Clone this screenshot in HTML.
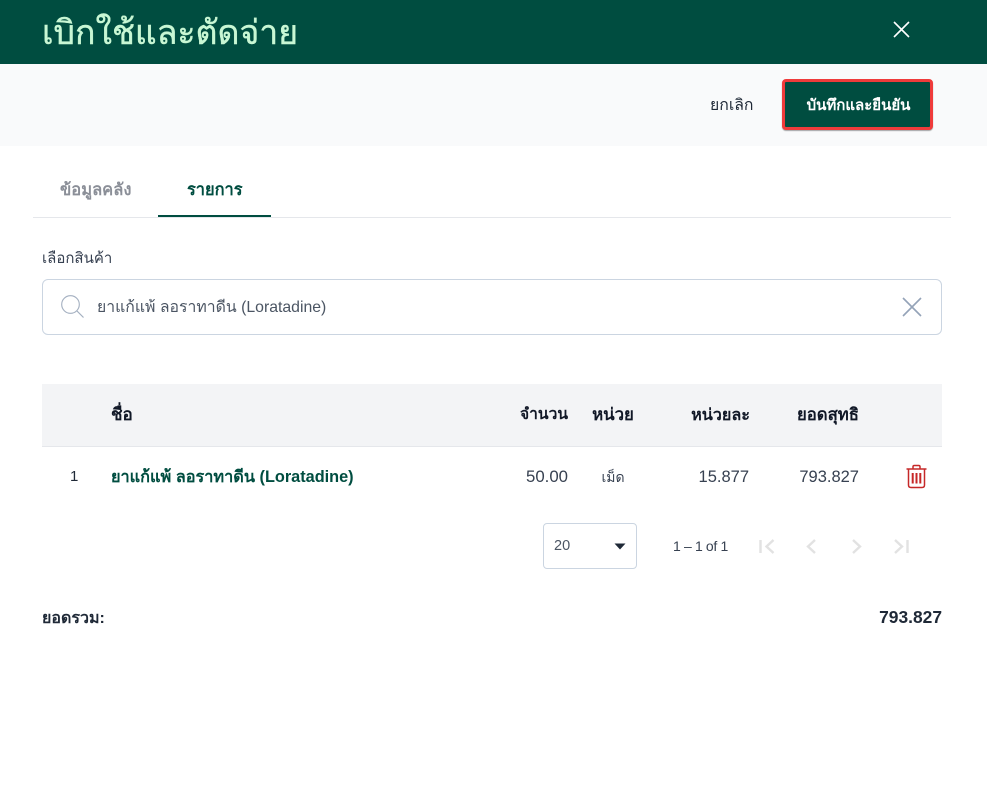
<!DOCTYPE html>
<html lang="th">
<head>
<meta charset="utf-8">
<title>เบิกใช้และตัดจ่าย</title>
<style>
html,body{margin:0;padding:0;background:#fff}
body{position:relative;width:987px;height:804px;overflow:hidden;font-family:"Liberation Sans",sans-serif;color:#1f2937;font-size:15px}
.a{position:absolute;white-space:nowrap;line-height:20px}
.r{text-align:right}
.c{text-align:center}
.b{font-weight:700}
svg{position:absolute;display:block}
</style>
</head>
<body>
<div class="a" style="left:0;top:0;width:987px;height:64px;background:#004d40"></div>
<div class="a" style="left:42px;top:11px;font-size:33.800px;line-height:44px;color:#c8f7d4;-webkit-text-stroke:.4px #c8f7d4">เบิกใช้และตัดจ่าย</div>
<svg style="left:892px;top:20px" width="19" height="19" viewBox="0 0 19 19"><path d="M2 2L17 17M17 2L2 17" stroke="#fff" stroke-width="1.600" fill="none"/></svg>

<div class="a" style="left:0;top:64px;width:987px;height:82px;background:#f9fafb"></div>
<div class="a" style="left:710px;top:96px;font-size:15.800px;color:#1f2937">ยกเลิก</div>
<div class="a" style="left:782px;top:79px;width:145px;height:45px;background:#004d40;border:3px solid #ef3b3b;border-radius:4px;box-shadow:0 1px 1px rgba(0,0,0,.35)"></div>
<div class="a b c" style="left:783px;top:96px;width:151px;font-size:15px;color:#fff">บันทึกและยืนยัน</div>

<div class="a b" style="left:60px;top:180px;font-size:16.500px;color:#8b8f98">ข้อมูลคลัง</div>
<div class="a b" style="left:187px;top:180px;font-size:16.400px;color:#004d40">รายการ</div>
<div class="a" style="left:33px;top:217px;width:918px;height:1px;background:#e5e7eb"></div>
<div class="a" style="left:158px;top:215px;width:113px;height:2px;background:#004d40"></div>

<div class="a" style="left:42px;top:249px;font-size:15px;color:#374151">เลือกสินค้า</div>
<div class="a" style="left:42px;top:279px;width:898px;height:54px;border:1px solid #cbd5e1;border-radius:6px"></div>
<svg style="left:60px;top:294px" width="25" height="25" viewBox="0 0 25 25"><circle cx="10.500" cy="10.500" r="8.800" stroke="#a3afc0" stroke-width="1.100" fill="none"/><path d="M17 17L23.500 23.500" stroke="#a3afc0" stroke-width="1.200" fill="none"/></svg>
<div class="a" style="left:97px;top:298px;font-size:15.800px;color:#4b5563">ยาแก้แพ้ ลอราทาดีน (Loratadine)</div>
<svg style="left:902px;top:297px" width="20" height="20" viewBox="0 0 20 20"><path d="M1 1L19 19M19 1L1 19" stroke="#94a3b8" stroke-width="1.600" fill="none"/></svg>

<div class="a" style="left:42px;top:384px;width:900px;height:62px;background:#f3f4f6"></div>
<div class="a" style="left:42px;top:446px;width:900px;height:1px;background:#e5e7eb"></div>
<div class="a b" style="left:111px;top:405px;font-size:17px;color:#111827">ชื่อ</div>
<div class="a b r" style="left:468px;top:405px;width:100px;font-size:15.600px;color:#111827">จำนวน</div>
<div class="a b c" style="left:573px;top:405px;width:80px;font-size:16.800px;color:#111827">หน่วย</div>
<div class="a b r" style="left:650px;top:405px;width:100px;font-size:16.200px;color:#111827">หน่วยละ</div>
<div class="a b r" style="left:759px;top:405px;width:100px;font-size:16.700px;color:#111827">ยอดสุทธิ</div>

<div class="a" style="left:70px;top:467px;font-size:15px;color:#1f2937">1</div>
<div class="a b" style="left:111px;top:467px;font-size:16.300px;color:#004d40">ยาแก้แพ้ ลอราทาดีน (Loratadine)</div>
<div class="a r" style="left:468px;top:467px;width:100px;font-size:16.800px;color:#374151">50.00</div>
<div class="a c" style="left:573px;top:467px;width:80px;font-size:14px;color:#374151">เม็ด</div>
<div class="a r" style="left:649px;top:467px;width:100px;font-size:16.500px;color:#374151">15.877</div>
<div class="a r" style="left:759px;top:467px;width:100px;font-size:16.500px;color:#374151">793.827</div>
<svg style="left:905px;top:464px" width="23" height="25" viewBox="0 0 23 25"><g fill="none" stroke="#c62828" stroke-width="1.500"><path d="M1.500 5H21.500"/><path d="M8 4.500V2.800Q8 1.500 9.300 1.500H13.700Q15 1.500 15 2.800V4.500"/><path d="M3.500 5V21Q3.500 23.500 6 23.500H17Q19.500 23.500 19.500 21V5"/><path d="M7.700 9V19.500M11.500 9V19.500M15.300 9V19.500" stroke-width="2"/></g></svg>

<div class="a" style="left:543px;top:523px;width:92px;height:44px;border:1px solid #cbd5e1;border-radius:4px"></div>
<div class="a" style="left:554px;top:536px;font-size:14.500px;color:#4b5563">20</div>
<svg style="left:614px;top:543px" width="12" height="7" viewBox="0 0 12 7"><path d="M0.500 0.500H11.500L6 6.500Z" fill="#1f2937"/></svg>
<div class="a" style="left:673px;top:536px;font-size:14px;letter-spacing:-.35px;color:#374151">1 – 1 of 1</div>
<svg style="left:755px;top:534px" width="160" height="24" viewBox="0 0 160 24"><g fill="none" stroke="#e2e2e2" stroke-width="2.400"><path d="M5.500 6V19M18.500 6L11.500 12.500L18.500 19"/><path d="M60 6L53 12.500L60 19"/><path d="M98 6L105 12.500L98 19"/><path d="M140 6L147 12.500L140 19M152.500 6V19"/></g></svg>

<div class="a b" style="left:42px;top:609px;font-size:16px;color:#1f2937">ยอดรวม:</div>
<div class="a b r" style="left:842px;top:607px;width:100px;font-size:17.400px;color:#1f2937">793.827</div>
</body>
</html>
